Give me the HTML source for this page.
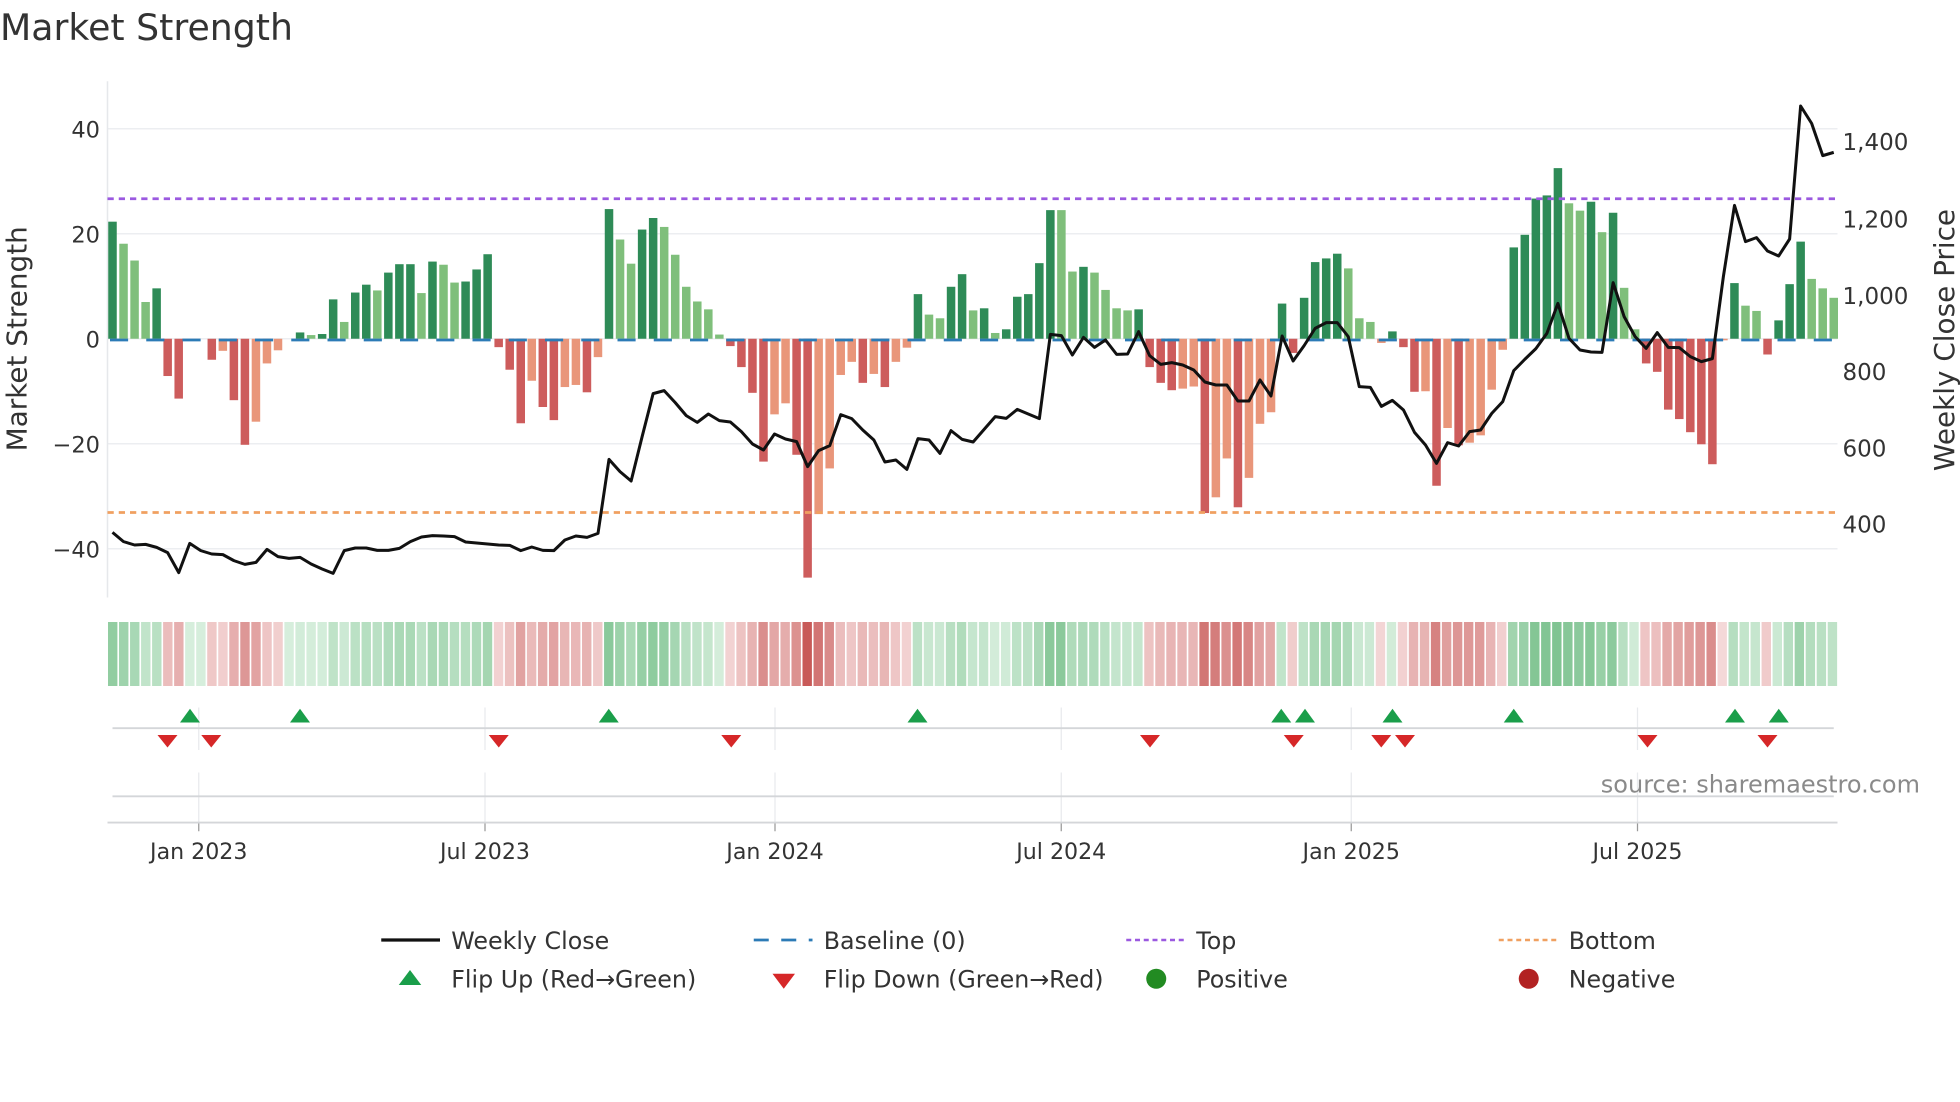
<!DOCTYPE html>
<html><head><meta charset="utf-8">
<style>
html,body{margin:0;padding:0;background:#fff;}
svg{display:block;font-family:"DejaVu Sans","Liberation Sans",sans-serif;}
</style></head>
<body>
<svg id="s" width="1960" height="1102" viewBox="0 0 1568 881.6" xmlns="http://www.w3.org/2000/svg">
<rect width="1568" height="882" fill="#fff"/>
<text x="0" y="32" font-size="29" fill="#333">Market Strength</text>
<g id="grid"></g>
<g id="heat"></g>
<g id="bars"></g>
<g id="base"></g>
<line x1="86" y1="159" x2="1470" y2="159" stroke="#9b59e0" stroke-width="2.2" stroke-dasharray="5,4"/>
<line x1="86" y1="410" x2="1470" y2="410" stroke="#f0a060" stroke-width="2.2" stroke-dasharray="5,4"/>
<polyline id="price" fill="none" stroke="#111" stroke-width="2.4" stroke-linejoin="round"/>
<g id="marks"></g>
<g font-size="18" fill="#333" text-anchor="end">
<text x="80" y="110">40</text><text x="80" y="194">20</text><text x="80" y="278">0</text>
<text x="80" y="362">−20</text><text x="80" y="446">−40</text>
</g>
<g font-size="18.4" fill="#333">
<text x="1474" y="120">1,400</text><text x="1474" y="182">1,200</text><text x="1474" y="243">1,000</text>
<text x="1474" y="304">800</text><text x="1474" y="365">600</text><text x="1474" y="426">400</text>
</g>
<text transform="translate(21,271) rotate(-90)" font-size="22.3" fill="#333" text-anchor="middle">Market Strength</text>
<text transform="translate(1563,272) rotate(-90)" font-size="22.3" fill="#333" text-anchor="middle">Weekly Close Price</text>
<g font-size="17.7" fill="#333" text-anchor="middle">
<text x="159" y="687">Jan 2023</text><text x="388" y="687">Jul 2023</text><text x="620" y="687">Jan 2024</text>
<text x="849" y="687">Jul 2024</text><text x="1081" y="687">Jan 2025</text><text x="1310" y="687">Jul 2025</text>
</g>
<text x="1536" y="634" font-size="19.2" fill="#8a8a8a" text-anchor="end">source: sharemaestro.com</text>
<g font-size="19" fill="#333">
<line x1="305" y1="752" x2="352" y2="752" stroke="#111" stroke-width="2.6"/>
<text x="361" y="759">Weekly Close</text>
<line x1="603" y1="752" x2="650" y2="752" stroke="#2c7bb6" stroke-width="2.2" stroke-dasharray="12,10"/>
<text x="659" y="759">Baseline (0)</text>
<line x1="901" y1="752" x2="948" y2="752" stroke="#9b59e0" stroke-width="2" stroke-dasharray="4,3"/>
<text x="957" y="759">Top</text>
<line x1="1199" y1="752" x2="1246" y2="752" stroke="#f0a060" stroke-width="2" stroke-dasharray="4,3"/>
<text x="1255" y="759">Bottom</text>
<polygon points="319,788 337,788 328,776" fill="#1a9e4a"/>
<text x="361" y="790">Flip Up (Red→Green)</text>
<polygon points="618,779 636,779 627,791" fill="#d62728"/>
<text x="659" y="790">Flip Down (Green→Red)</text>
<circle cx="925" cy="783" r="8" fill="#228b22"/>
<text x="957" y="790">Positive</text>
<circle cx="1223" cy="783" r="8" fill="#b22222"/>
<text x="1255" y="790">Negative</text>
</g>
</svg>
<script>
(function(){
var NS="http://www.w3.org/2000/svg";
function el(p,t,a){var e=document.createElementNS(NS,t);for(var k in a)e.setAttribute(k,a[k]);p.appendChild(e);return e;}
var bars="22.3D 18.1L 14.9L 7L 9.6D -7.1R -11.4R 0R 0R -4R -2.3r -11.7R -20.2R -15.8r -4.7r -2.2r 0R 1.2D 0.7L 0.9D 7.5D 3.2L 8.8D 10.3D 9.2L 12.6D 14.2D 14.2D 8.7L 14.7D 14.1L 10.7L 10.9D 13.2D 16.1D -1.6R -5.9R -16.1R -8r -13R -15.5R -9.2r -8.8r -10.2R -3.5r 24.7D 18.9L 14.3L 20.8D 23D 21.3L 16L 9.9L 7.1L 5.6L 0.8L -1.4R -5.4R -10.3R -23.4R -14.4r -12.3r -22.1R -45.5R -33.4r -24.7r -6.9r -4.4r -8.4R -6.7r -9.2R -4.4r -1.7r 8.5D 4.6L 3.9L 9.9D 12.3D 5.4L 5.8D 1.1L 1.8D 8D 8.5D 14.4D 24.5D 24.5L 12.8L 13.7D 12.6L 9.3L 5.8L 5.4L 5.6D -5.4R -8.4R -9.8R -9.5r -9.1r -33.2R -30.2r -22.8r -32.1R -26.5r -16.2r -14r 6.7D -2.7R 7.8D 14.6D 15.3D 16.2D 13.4L 3.9L 3.2L -0.8r 1.4D -1.6R -10.1R -10r -28R -17r -20.3R -19.8r -18.4r -9.7r -2.1r 17.4D 19.8D 26.7D 27.3D 32.5D 25.8L 24.4L 26.1D 20.3L 24D 9.7L 1.8L -4.7R -6.3R -13.5R -15.3R -17.8R -20.1R -23.9R -0.3r 10.6D 6.3L 5.3L -3R 3.5D 10.4D 18.5D 11.4L 9.6L 7.8L".split(" ");
var z2=[1057,1085,1095,1093,1102,1118,1178,1090,1112,1122,1124,1142,1153,1147,1108,1130,1135,1132,1152,1167,1180,1112,1104,1104,1111,1111,1105,1085,1071,1067,1068,1070,1086,1089,1092,1095,1096,1112,1101,1111,1112];
var z3=[1080,1068,1072,1060,838,875,903,770,641,632,668,707,727,702,722,726,755,792,810,762,777,785,860,812,797,704,716,750,780,846,840,868,776,780,820,752,778,786,748,710,715];
var z4=[688,702,716,463,467,525,472,502,480,523,522,455,527,553,548,555,570,606,615,615,663,663,600,648,468,543,497,445,428,428,470,620,622,679,661,690,757,795,850,788];
var z5=[1068,1025,1020,970,935,842,808,776,730,640,745,780,786,787,578,680,740,775,728,772,773,800,815,806,560,346,455,443,483,498,447,48,100,197,187];
var py=[];z2.concat(z3,z4).forEach(function(v){py.push(144+v/3.75);});z5.forEach(function(v){py.push(72+v/3.75);});
var N=bars.length,sp=(1467-90)/(N-1);
function X(i){return 90+i*sp;}
var g=document.getElementById("grid");
[103,187,271,355,439].forEach(function(y){el(g,"line",{x1:86,y1:y,x2:1470,y2:y,stroke:"#eceef1","stroke-width":1.2});});
el(g,"line",{x1:86,y1:65,x2:86,y2:478,stroke:"#e6e8eb","stroke-width":1.2});
[159,388,620,849,1081,1310].forEach(function(x){
 el(g,"line",{x1:x,y1:566,x2:x,y2:600,stroke:"#e8eaed","stroke-width":1});
 el(g,"line",{x1:x,y1:618,x2:x,y2:658,stroke:"#e8eaed","stroke-width":1});
 el(g,"line",{x1:x,y1:658,x2:x,y2:665,stroke:"#999","stroke-width":1});});
el(g,"line",{x1:90,y1:582.5,x2:1467,y2:582.5,stroke:"#d4d6d9","stroke-width":1.5});
el(g,"line",{x1:90,y1:637,x2:1467,y2:637,stroke:"#d4d6d9","stroke-width":1.5});
el(g,"line",{x1:86,y1:658,x2:1470,y2:658,stroke:"#d4d6d9","stroke-width":1.5});
var b=document.getElementById("bars"),h=document.getElementById("heat");
var col={D:"#2e8b57",L:"#7fbf7b",R:"#cd5c5c",r:"#e9967a"};
function mix(a,c,t){var r=[];for(var k=0;k<3;k++)r.push(Math.round(a[k]+(c[k]-a[k])*t));return "rgb("+r.join(",")+")";}
for(var i=0;i<N;i++){
 var s=bars[i],t=s.slice(-1),v=parseFloat(s);
 var x=X(i);
 if(v!==0){var y0=271,y1=271-v*4.2;el(b,"rect",{x:x-3.4,y:Math.min(y0,y1),width:6.8,height:Math.abs(y1-y0),fill:col[t]});}
 var c;
 if(t=="D"||t=="L"||(v===0&&i<20)){var tt=Math.min(Math.abs(v)/28,1);c=mix([214,238,220],[128,196,146],tt);}
 else{var tt=Math.min(Math.abs(v)/45,1);c=mix([245,218,218],[200,90,88],Math.pow(tt,0.8));}
 el(h,"rect",{x:86.4+i*(1471-86.4)/N,y:497.6,width:(1471-86.4)/N-1.3,height:51.2,fill:c});
}
var bs=document.getElementById("base");
el(bs,"line",{x1:88,y1:272,x2:1470,y2:272,stroke:"#2c7bb6","stroke-width":2.2,"stroke-dasharray":"14.5,14.5"});
var pts=[];for(var i=0;i<py.length&&i<N;i++)pts.push(X(i).toFixed(1)+","+py[i].toFixed(1));
document.getElementById("price").setAttribute("points",pts.join(" "));
var m=document.getElementById("marks");
[152,240,487,734,1025,1044,1114,1211,1388,1423].forEach(function(x){el(m,"polygon",{points:(x-8)+",578 "+(x+8)+",578 "+x+",567",fill:"#1a9e4a"});});
[134,169,399,585,920,1035,1105,1124,1318,1414].forEach(function(x){el(m,"polygon",{points:(x-8)+",588 "+(x+8)+",588 "+x+",598",fill:"#d62728"});});
})();
</script>
</body></html>
